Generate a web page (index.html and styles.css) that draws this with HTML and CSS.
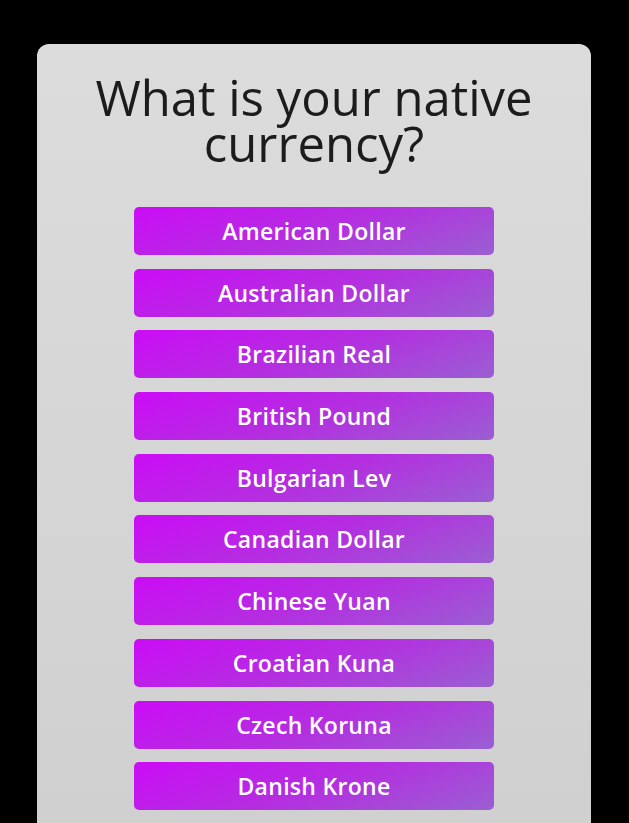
FILE: index.html
```html
<!DOCTYPE html>
<html>
<head>
<meta charset="utf-8">
<link rel="stylesheet" href="styles.css">
</head>
<body>
<main class="card">
  <h1 class="title">What is your native<br>currency?</h1>
  <div class="options">
    <button class="option">American Dollar</button>
    <button class="option">Australian Dollar</button>
    <button class="option">Brazilian Real</button>
    <button class="option">British Pound</button>
    <button class="option">Bulgarian Lev</button>
    <button class="option">Canadian Dollar</button>
    <button class="option">Chinese Yuan</button>
    <button class="option">Croatian Kuna</button>
    <button class="option">Czech Koruna</button>
    <button class="option">Danish Krone</button>
  </div>
</main>
</body>
</html>
```
FILE: styles.css
```css
html, body {
  margin: 0;
  padding: 0;
  background: #000;
  height: 100%;
  overflow: hidden;
}
body {
  padding: 44px 38px 0 37px;
  font-family: "Open Sans", "DejaVu Sans", sans-serif;
}
.card {
  width: 554px;
  min-height: 800px;
  background: linear-gradient(180deg, #dcdcdc 0%, #cfcfcf 100%);
  border-radius: 12px 12px 0 0;
  padding-top: 30px;
  display: flex;
  flex-direction: column;
  align-items: center;
}
.title {
  margin: 0;
  font-size: 49px;
  line-height: 46px;
  font-weight: 500;
  color: #1c1c1c;
  text-align: center;
}
.options {
  margin-top: 41px;
  display: flex;
  flex-direction: column;
  gap: 13.7px;
}
.option {
  width: 360px;
  height: 48px;
  border: none;
  border-radius: 5px;
  background: linear-gradient(160deg, #cb0cf6 0%, #b42ee0 50%, #9a5fd2 100%);
  color: #fff;
  font-family: "Open Sans", "DejaVu Sans", sans-serif;
  font-size: 23px;
  font-weight: 600;
  letter-spacing: 0.3px;
  padding: 0;
  cursor: pointer;
}
```
